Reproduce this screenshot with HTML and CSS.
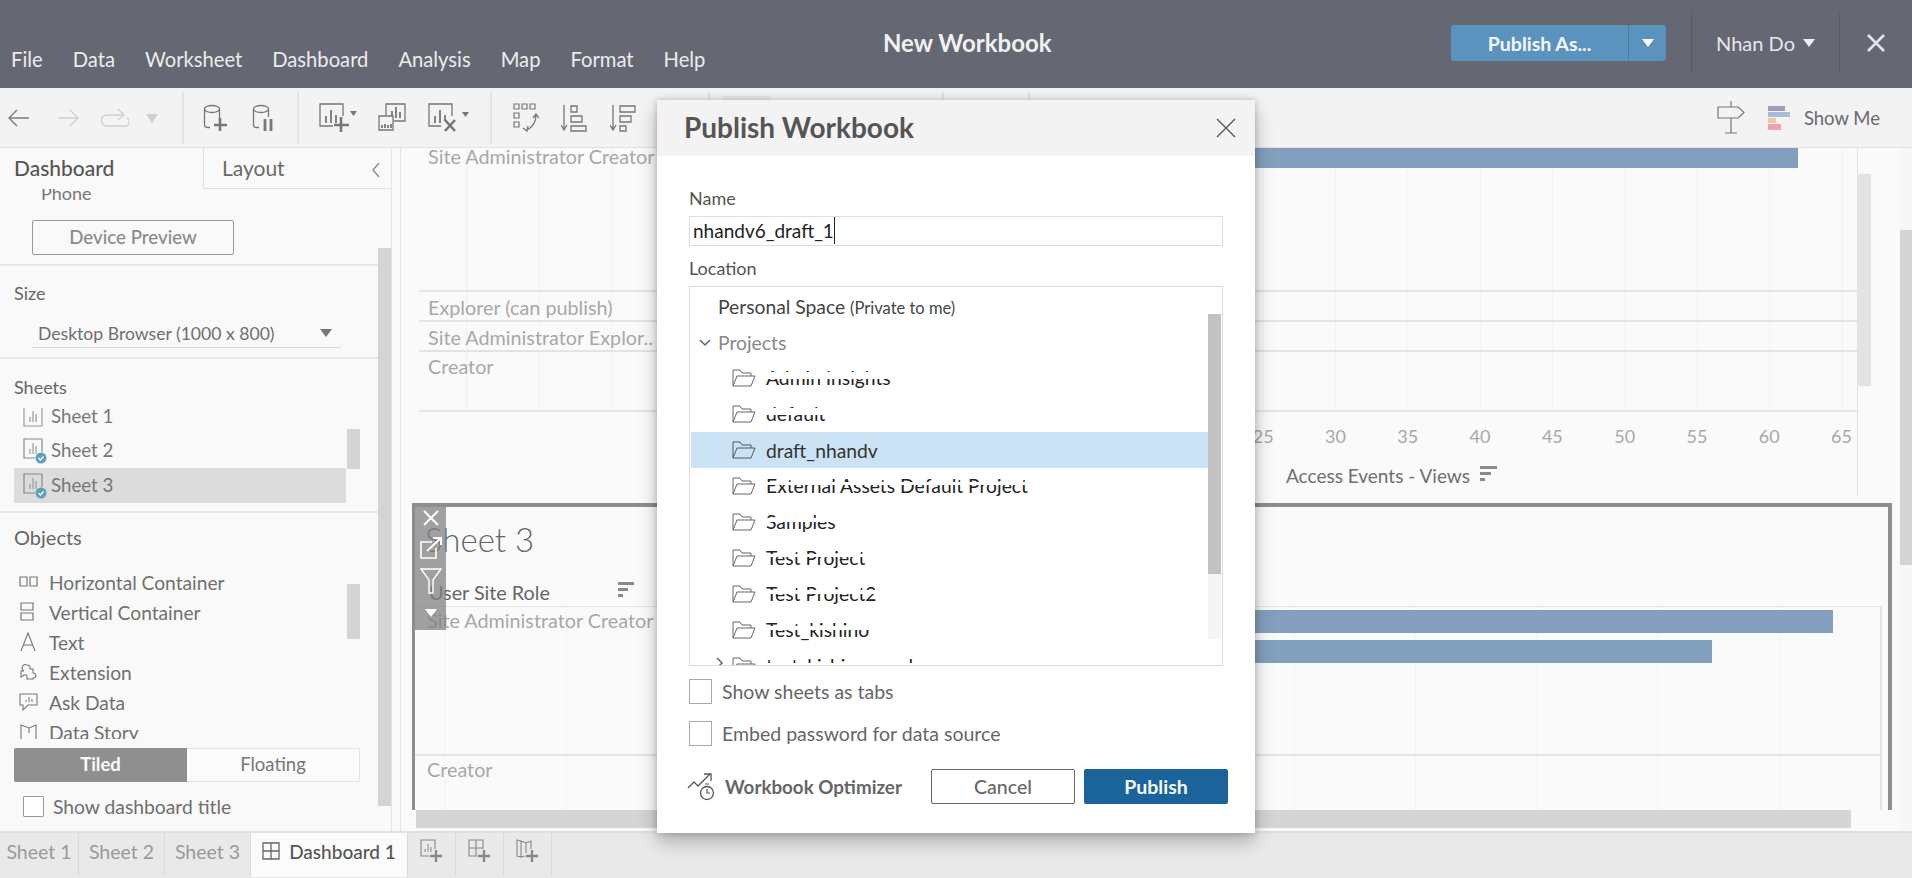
FILE: index.html
```html
<!DOCTYPE html>
<html lang="en">
<head>
<meta charset="utf-8">
<title>New Workbook</title>
<link rel="stylesheet" href="styles.css">
</head>
<body>
<div class="app">
  <header class="topbar">
    <nav class="menu">
      <span>File</span><span>Data</span><span>Worksheet</span><span>Dashboard</span><span>Analysis</span><span>Map</span><span>Format</span><span>Help</span>
    </nav>
    <div class="wb-title">New Workbook</div>
    <div class="top-right">
      <div class="publish-split">
        <span class="publish-main">Publish As...</span>
        <span class="publish-caret"><svg width="12" height="8" viewBox="0 0 12 8"><path d="M0 0h12L6 8z" fill="#fff"/></svg></span>
      </div>
      <span class="top-sep"></span>
      <span class="user">Nhan Do <svg width="12" height="8" viewBox="0 0 12 8"><path d="M0 0h12L6 8z" fill="#eee"/></svg></span>
      <span class="top-sep sep2"></span>
      <span class="top-close"><svg width="20" height="20" viewBox="0 0 20 20"><path d="M2 2l16 16M18 2L2 18" stroke="#e4e4e8" stroke-width="2.600" fill="none"/></svg></span>
    </div>
  </header>

  <div class="toolbar">
    <div class="tb-group g1">
      <span class="tb"><svg width="24" height="22" viewBox="0 0 24 22"><path d="M22 11H3M10 3l-8 8 8 8" stroke="#7c7c7c" stroke-width="1.400" fill="none"/></svg></span>
      <span class="tb"><svg width="24" height="22" viewBox="0 0 24 22"><path d="M2 11h19M14 3l8 8-8 8" stroke="#cfcfcf" stroke-width="1.400" fill="none"/></svg></span>
      <span class="tb"><svg width="28" height="20" viewBox="0 0 28 20"><path d="M21 7H6a4.500 4.500 0 0 0 0 11h16a4.500 4.500 0 0 0 4-8" stroke="#cfcfcf" stroke-width="1.400" fill="none"/><path d="M17 1l6 6-6 5" stroke="#cfcfcf" stroke-width="1.400" fill="none"/></svg></span>
      <span class="tb"><svg width="12" height="9" viewBox="0 0 12 9"><path d="M0 0h12L6 9z" fill="#cfcfcf"/></svg></span>
    </div>
    <div class="tb-group g2">
      <span class="tb"><svg width="26" height="28" viewBox="0 0 26 28"><ellipse cx="9" cy="5" rx="7.500" ry="3.500" fill="none" stroke="#777" stroke-width="1.300"/><path d="M1.500 5v16q0 2.500 3.500 2.500h2M16.500 5v11" fill="none" stroke="#777" stroke-width="1.300"/><path d="M17 14v13M11 21h13" stroke="#777" stroke-width="2.600"/></svg></span>
      <span class="tb"><svg width="24" height="28" viewBox="0 0 24 28"><ellipse cx="9" cy="5" rx="7.500" ry="3.500" fill="none" stroke="#777" stroke-width="1.300"/><path d="M1.500 5v16q0 2.500 3.500 2.500h2M16.500 5v8" fill="none" stroke="#777" stroke-width="1.300"/><path d="M13 15v12M19 15v12" stroke="#777" stroke-width="2.800"/></svg></span>
    </div>
    <div class="tb-group g3">
      <span class="tb"><svg width="38" height="30" viewBox="0 0 38 30"><path d="M14 23H1V1h23v12" fill="none" stroke="#777" stroke-width="1.300"/><path d="M7 20v-7M12 20V7M17 20v-8" stroke="#777" stroke-width="1.800"/><path d="M22 14v15M15 22h15" stroke="#777" stroke-width="2.600"/><path d="M31 8h7l-3.500 5z" fill="#777"/></svg></span>
      <span class="tb"><svg width="28" height="30" viewBox="0 0 28 30"><path d="M8 12V1h19v17H16" fill="none" stroke="#777" stroke-width="1.300"/><path d="M1 13h14v14H1z" fill="none" stroke="#777" stroke-width="1.300"/><path d="M14 13V8M18 15V4M22 15v-6M4 25v-3M7 25v-4M10 25v-3M13 25v-4" stroke="#777" stroke-width="1.800"/></svg></span>
      <span class="tb"><svg width="42" height="30" viewBox="0 0 42 30"><path d="M13 23H1V1h23v12" fill="none" stroke="#777" stroke-width="1.300"/><path d="M7 20v-7M12 20V7M17 18v-6" stroke="#777" stroke-width="1.800"/><path d="M17 17l10 11M27 17L17 28" stroke="#777" stroke-width="2.600"/><path d="M34 9h7l-3.500 5z" fill="#777"/></svg></span>
    </div>
    <div class="tb-group g4">
      <span class="tb"><svg width="26" height="30" viewBox="0 0 26 30"><path d="M1 1h5v5H1zM9 1h5v5H9zM17 1h5v5h-5zM1 10h5v5H1zM1 19h5v5H1z" fill="none" stroke="#777" stroke-width="1.200"/><path d="M23 12q0 10-9 15M10 25l4 3 1-5M20 15l3-4 3 4" fill="none" stroke="#777" stroke-width="1.300"/></svg></span>
      <span class="tb"><svg width="26" height="30" viewBox="0 0 26 30"><path d="M3 2v24M0 22l3 5 3-5" fill="none" stroke="#777" stroke-width="1.300"/><path d="M10 3h6v6h-6zM10 13h11v6H10zM10 23h15v5H10z" fill="none" stroke="#777" stroke-width="1.300"/></svg></span>
      <span class="tb"><svg width="26" height="30" viewBox="0 0 26 30"><path d="M3 2v24M0 22l3 5 3-5" fill="none" stroke="#777" stroke-width="1.300"/><path d="M10 3h15v6H10zM10 13h11v6H10zM10 23h6v5h-6z" fill="none" stroke="#777" stroke-width="1.300"/></svg></span>
    </div>
    <div class="tb-group g5"><span class="tb-fit"></span></div>
    <div class="tb-group g6"></div>
    <div class="tb-right">
      <svg class="signpost" width="28" height="34" viewBox="0 0 28 34"><path d="M14 0v6M14 17v15M8 32h12M1 6h20l6 5.500-6 5.500H1z" fill="none" stroke="#777" stroke-width="1.200"/></svg>
      <svg width="22" height="24" viewBox="0 0 22 24"><path d="M0 0h17v5H0z" fill="#a89bb5"/><path d="M0 6h22v5H0z" fill="#a7bdd6"/><path d="M0 12h8v5H0z" fill="#f5c7a0"/><path d="M0 18h13v6H0z" fill="#f0a3ae"/></svg>
      <span class="showme">Show Me</span>
    </div>
  </div>

  <main class="workspace">
    <aside class="panel">
      <div class="panel-tabs">
        <span class="ptab active">Dashboard</span>
        <span class="ptab layout">Layout</span>
        <span class="collapse"><svg width="10" height="16" viewBox="0 0 10 16"><path d="M8 1L2 8l6 7" stroke="#888" stroke-width="1.300" fill="none"/></svg></span>
      </div>
      <div class="panel-row">
        <div class="panel-body">
          <section class="sec sec-device">
            <div class="phone">Phone</div>
            <div class="device-btn">Device Preview</div>
          </section>
          <section class="sec sec-size">
            <div class="sec-head">Size</div>
            <div class="size-select"><span>Desktop Browser (1000 x 800)</span><svg width="12" height="8" viewBox="0 0 12 8"><path d="M0 0h12L6 8z" fill="#777"/></svg></div>
          </section>
          <section class="sec sec-sheets">
            <div class="sec-head">Sheets</div>
            <div class="sheet-list">
              <div class="sheet-row">
                <svg class="sheet-ico" width="20" height="22" viewBox="0 0 20 22"><path d="M1 2v18h18V2" fill="none" stroke="#999" stroke-width="1.200"/><path d="M7 16v-5M10 16V5M13 16V8" stroke="#999" stroke-width="1.200"/></svg>
                <span>Sheet 1</span>
              </div>
              <div class="sheet-row">
                <svg class="sheet-ico" width="24" height="26" viewBox="0 0 24 26"><path d="M12 20H1V1h18v13" fill="none" stroke="#888" stroke-width="1.200"/><path d="M7 16v-5M10 16V5M13 16V8" stroke="#999" stroke-width="1.200"/><circle cx="18" cy="20" r="5.500" fill="#5f9fbe"/><path d="M15.500 20l2 2 3-3.500" stroke="#fff" stroke-width="1.300" fill="none"/></svg>
                <span>Sheet 2</span>
              </div>
              <div class="sheet-row selected">
                <svg class="sheet-ico" width="24" height="26" viewBox="0 0 24 26"><path d="M12 20H1V1h18v13" fill="none" stroke="#888" stroke-width="1.200"/><path d="M7 16v-5M10 16V5M13 16V8" stroke="#999" stroke-width="1.200"/><circle cx="18" cy="20" r="5.500" fill="#5f9fbe"/><path d="M15.500 20l2 2 3-3.500" stroke="#fff" stroke-width="1.300" fill="none"/></svg>
                <span>Sheet 3</span>
              </div>
              <span class="thumb sheet-thumb"></span>
            </div>
          </section>
          <section class="sec-objects">
            <div class="sec-head">Objects</div>
            <div class="obj-list">
              <div class="obj"><svg width="20" height="14" viewBox="0 0 20 14"><path d="M1 2h7v9H1zM11 2h7v9h-7z" fill="none" stroke="#777" stroke-width="1.200"/></svg><span>Horizontal Container</span></div>
              <div class="obj"><svg width="20" height="20" viewBox="0 0 20 20"><path d="M2 1h12v7H2zM2 11h12v7H2z" fill="none" stroke="#777" stroke-width="1.200"/></svg><span>Vertical Container</span></div>
              <div class="obj"><svg width="20" height="20" viewBox="0 0 20 20"><path d="M2 19L9 1l7 18M4.500 13h9" fill="none" stroke="#777" stroke-width="1.100"/></svg><span>Text</span></div>
              <div class="obj"><svg width="20" height="20" viewBox="0 0 20 20"><path d="M2 9h3a3 3 0 0 1 3-6 3 3 0 0 1 3 4h3v4a3 3 0 0 1 3 3 3 3 0 0 1-3 2v1H8v-2a2 2 0 0 0-3-2l-3 2z" fill="none" stroke="#777" stroke-width="1.100"/></svg><span>Extension</span></div>
              <div class="obj"><svg width="20" height="20" viewBox="0 0 20 20"><path d="M1 2h17v11H9l-5 5v-5H1z" fill="none" stroke="#777" stroke-width="1.100"/><path d="M7 10V8M10 10V5M13 10V7" stroke="#777" stroke-width="1"/></svg><span>Ask Data</span></div>
              <div class="obj"><svg width="20" height="20" viewBox="0 0 20 20"><path d="M2 19V3l8 3 7-3v16M10 6v5" fill="none" stroke="#777" stroke-width="1.100"/></svg><span>Data Story</span></div>
            </div>
            <span class="thumb obj-thumb"></span>
          </section>
          <div class="mode">
            <span class="mode-on">Tiled</span>
            <span class="mode-off">Floating</span>
          </div>
          <label class="dash-title"><span class="check small"></span><span>Show dashboard title</span></label>
        </div>
        <div class="panel-scroll"><span class="panel-thumb"></span></div>
      </div>
    </aside>

    <div class="gutter"></div>

    <div class="canvas">
      <section class="zone-top">
        <div class="chart-a">
          <div class="rows grid-a">
            <div class="row r1"><span>Site Administrator Creator</span><i class="bar bar-a"></i></div>
            <div class="row r2"><span>Explorer (can publish)</span></div>
            <div class="row r2"><span>Site Administrator Explor..</span></div>
            <div class="row r3"><span>Creator</span></div>
          </div>
          <div class="axis">
            <span>25</span><span>30</span><span>35</span><span>40</span><span>45</span><span>50</span><span>55</span><span>60</span><span>65</span>
          </div>
          <div class="axis-title"><span>Access Events - Views</span><svg width="17" height="16" viewBox="0 0 17 16"><path d="M0 0h17v3H0zM0 6h11v3H0zM0 12h5v3H0z" fill="#8a8a8a"/></svg></div>
          <span class="mini-scroll"></span>
        </div>
      </section>

      <section class="zone-sel">
        <div class="tools">
          <svg width="18" height="18" viewBox="0 0 18 18"><path d="M2 2l14 14M16 2L2 16" stroke="#fff" stroke-width="2" fill="none"/></svg>
          <svg width="24" height="24" viewBox="0 0 24 24"><path d="M13 6H2v16h15V12" fill="none" stroke="#fff" stroke-width="1.600"/><path d="M8 15L22 2M14 2h8v7" fill="none" stroke="#fff" stroke-width="2"/></svg>
          <svg width="22" height="26" viewBox="0 0 22 26"><path d="M1 1h20l-8 11v13h-4V12z" fill="none" stroke="#fff" stroke-width="1.400"/></svg>
          <svg width="12" height="8" viewBox="0 0 12 8"><path d="M0 0h12L6 8z" fill="#fff"/></svg>
        </div>
        <h2 class="sheet-title">Sheet 3</h2>
        <div class="field-head"><span>User Site Role</span><svg width="16" height="16" viewBox="0 0 16 16"><path d="M0 0h16v3H0zM0 6h10v3H0zM0 12h5v3H0z" fill="#8a8a8a"/></svg></div>
        <div class="rows grid-b">
          <div class="row r4"><span>Site Administrator Creator</span><i class="bar bar-b"></i><i class="bar bar-c"></i></div>
          <div class="row r5"><span>Creator</span></div>
        </div>
      </section>

      <div class="hscroll"><span class="hthumb"></span></div>
    </div>

    <div class="vscroll"><span class="vthumb"></span></div>
  </main>

  <footer class="tabs">
    <span class="tab">Sheet 1</span>
    <span class="tab">Sheet 2</span>
    <span class="tab">Sheet 3</span>
    <span class="tab on"><svg width="18" height="18" viewBox="0 0 18 18"><path d="M1 1h16v16H1zM9 1v16M1 9h16" fill="none" stroke="#666" stroke-width="1.300"/></svg>Dashboard 1</span>
    <span class="tab ico"><svg width="24" height="24" viewBox="0 0 24 24"><path d="M9 17H1V1h14v9" fill="none" stroke="#888" stroke-width="1.100"/><path d="M5 13v-3M8 13V5M11 13V8" stroke="#888" stroke-width="1"/><path d="M16 11v12M10 17h12" stroke="#888" stroke-width="2.400"/></svg></span>
    <span class="tab ico"><svg width="24" height="24" viewBox="0 0 24 24"><path d="M9 17H1V1h14v9M8 1v16M1 9h14" fill="none" stroke="#888" stroke-width="1.100"/><path d="M16 11v12M10 17h12" stroke="#888" stroke-width="2.400"/></svg></span>
    <span class="tab ico"><svg width="24" height="24" viewBox="0 0 24 24"><path d="M9 17l-4 1V2l5 2 5-2v8M10 4v10M5 18L1 17V1l4 1" fill="none" stroke="#888" stroke-width="1.100"/><path d="M16 11v12M10 17h12" stroke="#888" stroke-width="2.400"/></svg></span>
  </footer>

  <div class="modal">
    <div class="modal-head">
      <h1>Publish Workbook</h1>
      <svg width="20" height="20" viewBox="0 0 20 20"><path d="M1 1l18 18M19 1L1 19" stroke="#555" stroke-width="1.300" fill="none"/></svg>
    </div>
    <div class="modal-body">
      <div class="m-label first">Name</div>
      <div class="m-input"><span class="typed">nhandv6_draft_1</span></div>
      <div class="m-label">Location</div>
      <div class="tree">
        <div class="t-row top"><span>Personal Space <small>(Private to me)</small></span></div>
        <div class="t-row top muted"><svg class="chev" width="12" height="8" viewBox="0 0 12 8"><path d="M1 1l5 5 5-5" stroke="#666" stroke-width="1.500" fill="none"/></svg><span>Projects</span></div>
        <div class="t-row proj"><svg class="folder" width="24" height="18" viewBox="0 0 24 18"><path d="M1 17V1h7l2 3h9v3M1 17l4-10h18l-4 10z" fill="none" stroke="#666" stroke-width="1"/></svg><span class="torn t-a">Admin Insights</span></div>
        <div class="t-row proj"><svg class="folder" width="24" height="18" viewBox="0 0 24 18"><path d="M1 17V1h7l2 3h9v3M1 17l4-10h18l-4 10z" fill="none" stroke="#666" stroke-width="1"/></svg><span class="torn t-a">default</span></div>
        <div class="t-row proj sel"><svg class="folder" width="24" height="18" viewBox="0 0 24 18"><path d="M1 17V1h7l2 3h9v3M1 17l4-10h18l-4 10z" fill="none" stroke="#4c5a66" stroke-width="1"/></svg><span>draft_nhandv</span></div>
        <div class="t-row proj"><svg class="folder" width="24" height="18" viewBox="0 0 24 18"><path d="M1 17V1h7l2 3h9v3M1 17l4-10h18l-4 10z" fill="none" stroke="#666" stroke-width="1"/></svg><span class="torn t-b">External Assets Default Project</span></div>
        <div class="t-row proj"><svg class="folder" width="24" height="18" viewBox="0 0 24 18"><path d="M1 17V1h7l2 3h9v3M1 17l4-10h18l-4 10z" fill="none" stroke="#666" stroke-width="1"/></svg><span class="torn t-c">Samples</span></div>
        <div class="t-row proj"><svg class="folder" width="24" height="18" viewBox="0 0 24 18"><path d="M1 17V1h7l2 3h9v3M1 17l4-10h18l-4 10z" fill="none" stroke="#666" stroke-width="1"/></svg><span class="torn t-b">Test Project</span></div>
        <div class="t-row proj"><svg class="folder" width="24" height="18" viewBox="0 0 24 18"><path d="M1 17V1h7l2 3h9v3M1 17l4-10h18l-4 10z" fill="none" stroke="#666" stroke-width="1"/></svg><span class="torn t-c">Test Project2</span></div>
        <div class="t-row proj"><svg class="folder" width="24" height="18" viewBox="0 0 24 18"><path d="M1 17V1h7l2 3h9v3M1 17l4-10h18l-4 10z" fill="none" stroke="#666" stroke-width="1"/></svg><span class="torn t-c">Test_kishino</span></div>
        <div class="t-row proj"><svg class="chev2" width="8" height="12" viewBox="0 0 8 12"><path d="M1 1l5 5-5 5" stroke="#666" stroke-width="1.500" fill="none"/></svg><svg class="folder" width="24" height="18" viewBox="0 0 24 18"><path d="M1 17V1h7l2 3h9v3M1 17l4-10h18l-4 10z" fill="none" stroke="#666" stroke-width="1"/></svg><span class="torn t-d">test_kishino_reader</span></div>
        <div class="tree-track"><span class="tree-thumb"></span></div>
      </div>
      <label class="m-check c1"><span class="check"></span><span>Show sheets as tabs</span></label>
      <label class="m-check c2"><span class="check"></span><span>Embed password for data source</span></label>
      <div class="m-foot">
        <svg class="opt-ico" width="29" height="28" viewBox="0 0 29 28"><path d="M1 15l6-6 4 4 12-12M17 1h7v7" fill="none" stroke="#555" stroke-width="1.300"/><circle cx="20" cy="20" r="6.500" fill="#fff" stroke="#555" stroke-width="1.300"/><path d="M20 16v4h3M18 11h4" fill="none" stroke="#555" stroke-width="1.200"/></svg>
        <span class="opt">Workbook Optimizer</span>
        <span class="btn cancel">Cancel</span>
        <span class="btn publish">Publish</span>
      </div>
    </div>
  </div>
</div>
</body>
</html>
```
FILE: styles.css
```css
* { box-sizing: border-box; }
html, body { margin: 0; height: 100%; overflow: hidden; }
body { font-family: "Lato", "Liberation Sans", sans-serif; color: #666; background: #e9e9e9; }
svg { display: block; flex: none; }

.app { position: relative; width: 1912px; height: 878px; display: flex; flex-direction: column; overflow: hidden; }

/* top bar */
.topbar { height: 88px; flex: none; background: #656772; display: flex; position: relative; }
.menu { display: flex; gap: 30px; padding: 47px 0 0 11px; font-size: 20.200px; line-height: 24px; color: #ececec; }
.wb-title { position: absolute; left: 883px; top: 27px; font-size: 24px; line-height: 32px; font-weight: 700; color: #f1f1f1; }
.top-right { margin-left: auto; display: flex; align-items: center; height: 86px; }
.publish-split { display: flex; height: 36px; width: 215px; background: #5b93bf; border-radius: 3px; color: #f6f9fb; font-weight: 700; font-size: 19.500px; }
.publish-main { width: 178px; display: flex; align-items: center; justify-content: center; border-right: 1px solid #4f7a9e; }
.publish-caret { flex: 1; display: flex; align-items: center; justify-content: center; }
.top-sep { width: 1px; height: 59px; background: #565863; margin-left: 25px; }
.top-sep.sep2 { margin-left: 24px; }
.user { display: flex; align-items: center; gap: 8px; margin-left: 24px; font-size: 20px; color: #e6e6ea; }
.top-close { width: 72px; display: flex; justify-content: center; }

/* toolbar */
.toolbar { height: 60px; flex: none; background: #f3f3f3; display: flex; border-bottom: 1px solid #e2e2e2; }
.tb-group { display: grid; height: 52px; margin-top: 4px; border-right: 2px solid #e3e3e3; }
.tb { display: flex; align-items: center; justify-content: center; }
.g1 { width: 184px; grid-template-columns: 38px 60px 34px 40px; }
.g2 { width: 115px; grid-template-columns: 64px 32px; }
.g3 { width: 193px; grid-template-columns: 78px 30px 84px; }
.g4 { width: 218px; grid-template-columns: 68px 28px 70px; }
.g5 { width: 234px; }
.g6 { width: 86px; }
.tb-fit { display: block; width: 48px; height: 8px; margin: 4px 0 0 13px; background: #e8e8e8; }
.tb-right { margin-left: auto; display: flex; align-items: center; padding-right: 32px; }
.signpost { margin-right: 23px; }
.showme { margin-left: 14px; font-size: 18.500px; color: #6a6a6a; }

/* workspace */
.workspace { flex: 1; min-height: 0; display: flex; background: #fafafa; }

.panel { width: 392px; flex: none; display: flex; flex-direction: column; background: #f9f9f9; border-right: 1px solid #e4e4e4; }
.panel-tabs { height: 41px; flex: none; display: flex; align-items: center; position: relative; }
.ptab { font-size: 21px; line-height: 39px; height: 41px; }
.ptab.active { width: 203px; padding-left: 14px; color: #555; font-weight: 500; }
.ptab.layout { flex: 1; padding-left: 18px; border-left: 1px solid #e0e0e0; border-bottom: 1px solid #e0e0e0; color: #6a6a6a; }
.collapse { position: absolute; left: 371px; top: 14px; }
.panel-row { flex: 1; min-height: 0; display: flex; }
.panel-body { width: 378px; flex: none; }
.panel-scroll { flex: 1; margin-top: 27px; height: 590px; padding-top: 32px; }
.panel-thumb { display: block; height: 558px; background: #d4d4d4; }

.sec { border-bottom: 2px solid #e6e6e6; }
.sec-device { height: 77px; }
.phone { height: 11px; overflow: hidden; margin-left: 41px; font-size: 18px; line-height: 8px; color: #777; padding: 0; }
.device-btn { margin: 20px 0 0 32px; width: 202px; height: 35px; border: 1px solid #9a9a9a; border-radius: 2px; display: flex; align-items: center; justify-content: center; font-size: 18.700px; font-weight: 500; color: #8a8a8a; padding-bottom: 2px; }
.sec-head { padding-left: 14px; font-size: 18px; line-height: 24px; color: #666; }
.sec-size { height: 93px; padding-top: 15px; }
.size-select { margin: 8px 0 0 32px; width: 309px; height: 35px; padding: 6px 9px 0 6px; display: flex; align-items: center; justify-content: space-between; border-bottom: 1px solid #d8d8d8; font-size: 17.600px; color: #6f6f6f; }
.sec-sheets { height: 154px; padding-top: 16px; }
.sheet-list { position: relative; margin-top: 1px; }
.sheet-row { margin-left: 14px; width: 332px; height: 35px; display: flex; align-items: center; gap: 4px; padding-left: 9px; font-size: 18.700px; color: #777; margin-bottom: 0; }
.sheet-row span { margin-top: -2px; }
.sheet-row:first-child { height: 33px; gap: 8px; }
.sheet-row.selected { background: #dcdcdc; }
.thumb { position: absolute; display: block; left: 347px; width: 13px; background: #d4d4d4; }
.sheet-thumb { top: 29px; height: 40px; }
.sec-objects { position: relative; height: 226px; padding-top: 12px; overflow: hidden; }
.sec-objects .sec-head { font-size: 20px; }
.obj-list { margin-top: 18px; padding-left: 19px; }
.obj { height: 30px; display: flex; align-items: center; gap: 10px; font-size: 19.200px; color: #707070; }
.obj-thumb { top: 71px; height: 55px; }
.mode { margin: 9px 0 0 14px; width: 346px; height: 34px; display: flex; font-size: 18.500px; border: 1px solid #e2e2e2; background: #fbfbfb; }
.mode-on { width: 173px; margin: -1px 0 -1px -1px; background: #8f8f8f; color: #fafafa; font-weight: 700; border-radius: 2px 0 0 2px; display: flex; align-items: center; justify-content: center; padding-bottom: 2px; }
.mode-off { flex: 1; display: flex; align-items: center; justify-content: center; color: #777; padding-bottom: 2px; }
.dash-title { margin: 13px 0 0 23px; display: flex; align-items: center; gap: 9px; font-size: 19.300px; color: #6f6f6f; }
.check { display: block; width: 23px; height: 25px; flex: none; border: 1px solid #a9a9a9; background: #fff; }
.check.small { width: 21px; height: 21px; border-color: #9a9a9a; border-radius: 1px; }

.gutter { width: 9px; flex: none; border-right: 1px solid #e4e4e4; background: #f9f9f9; }

/* canvas */
.canvas { flex: 1; min-width: 0; display: flex; flex-direction: column; background: #fafafa; }
.zone-top { height: 355px; flex: none; padding-left: 18px; overflow: hidden; }
.chart-a { position: relative; width: 1439px; height: 348px; border-right: 1px solid #e2e2e2; }
.rows { position: relative; }
.grid-a { background: linear-gradient(90deg, #f1f1f1 1px, transparent 1px) 916px 0 / 72.400px 100%; }
.row { position: relative; border-bottom: 2px solid #e3e3e3; font-size: 19.800px; color: #a8a8a8; padding-left: 9px; }
.row > span { display: block; line-height: 26px; white-space: nowrap; }
.r1 { height: 144px; }
.r1 > span { line-height: 17px; }
.r2 { height: 30px; padding-top: 2px; }
.r3 { height: 60px; padding-top: 1px; }
.r4 { height: 149px; }
.r5 { height: 56px; border-bottom: 0; }
.bar { position: absolute; display: block; background: #82a0bd; }
.bar-a { left: 260px; width: 1119px; top: 0; height: 20px; }
.bar-b { left: 260px; width: 1158px; top: 3px; height: 23px; }
.bar-c { left: 260px; width: 1037px; top: 33px; height: 23px; }
.axis { display: flex; padding: 12px 0 0 808px; font-size: 18px; line-height: 24px; color: #a8a8a8; }
.axis span { width: 72.300px; text-align: center; flex: none; }
.axis-title { display: flex; align-items: center; gap: 10px; margin: 16px 0 0 867px; font-size: 19px; line-height: 24px; color: #6f6f6f; }
.axis-title svg { margin-top: -4px; }
.mini-scroll { position: absolute; left: 1439px; top: 26px; width: 13px; height: 212px; background: #e3e3e3; }

.zone-sel { position: relative; height: 307px; flex: none; margin-left: 11px; width: 1480px; border: solid #8e8e8e; border-width: 4px 4px 0 3px; overflow: hidden; }
.tools { position: absolute; z-index: 2; left: 0; top: 0; width: 31px; height: 123px; background: rgba(130, 130, 130, .75); display: flex; flex-direction: column; align-items: center; padding-top: 2px; }
.tools svg:nth-child(2) { margin-top: 9px; }
.tools svg:nth-child(3) { margin-top: 8px; }
.tools svg:nth-child(4) { margin-top: 15px; }
.sheet-title { margin: 0; padding: 13px 0 0 10px; font-size: 33px; line-height: 38px; font-weight: 300; color: #666; }
.field-head { display: flex; align-items: center; padding-left: 14px; margin-top: 21px; height: 26px; font-size: 19.800px; color: #666; }
.field-head svg { margin: -4px 0 0 29px; }
.field-head span { width: 160px; white-space: nowrap; }
.grid-b { margin-top: 1px; width: 1467px; border-top: 1px solid #e3e3e3; border-right: 2px solid #e3e3e3; background: linear-gradient(90deg, #f3f3f3 1px, transparent 1px) 1000px 0 / 121.300px 100%; }
.grid-b .row { padding-left: 12px; }
.hscroll { height: 18px; flex: none; margin-left: 15px; width: 1435px; background: #d5d5d5; }
.hthumb { display: block; }
.vscroll { width: 12px; flex: none; padding-top: 82px; background: #f7f7f7; }
.vthumb { display: block; height: 335px; background: #d4d4d4; }

/* sheet tabs */
.tabs { height: 47px; flex: none; background: #e9e9e9; border-top: 2px solid #e0e0e0; display: flex; font-size: 19.500px; color: #999; }
.tab { height: 44px; display: flex; align-items: center; justify-content: center; gap: 9px; border-right: 1px solid #dadada; width: 86px; padding-bottom: 8px; }
.tab:first-child { width: 79px; }
.tab.on { width: 157px; background: #fbfbfb; color: #555; font-weight: 500; font-size: 19px; }
.tab.ico { width: 48px; }

/* modal */
.modal { position: absolute; z-index: 5; left: 657px; top: 100px; width: 598px; height: 733px; background: #fff; box-shadow: 0 8px 18px rgba(0, 0, 0, .28), 0 0 6px rgba(0, 0, 0, .18); display: flex; flex-direction: column; }
.modal-head { height: 56px; flex: none; background: #f3f3f3; display: flex; align-items: center; justify-content: space-between; padding: 0 19px 0 27px; }
.modal-head h1 { margin: 0 0 2px; font-size: 28px; font-weight: 700; color: #555; }
.modal-body { padding: 0 32px; }
.m-label { margin-top: 10px; font-size: 18px; line-height: 24px; color: #555; }
.m-label.first { margin-top: 30px; }
.m-input { margin-top: 6px; height: 30px; border: 1px solid #ddd; padding-left: 3px; font-size: 19px; line-height: 27px; color: #222; }
.typed { border-right: 1px solid #222; display: inline-block; height: 27px; }
.tree { position: relative; margin-top: 6px; height: 380px; border: 1px solid #ddd; overflow: hidden; padding-top: 1px; font-size: 19.300px; }
.t-row { height: 36px; width: 517px; margin-left: 1px; display: flex; align-items: center; color: #444; position: relative; }
.t-row.top { padding-left: 27px; }
.t-row small { font-size: 16.500px; }
.t-row.muted { color: #888; }
.chev { position: absolute; left: 8px; top: 15px; }
.chev2 { position: absolute; left: 25px; top: 9px; }
.t-row.proj { padding-left: 41px; gap: 10px; color: #222; }
.t-row.sel { background: #cbe3f5; color: #333; }
.torn { position: relative; display: block; line-height: 24px; white-space: nowrap; }
.torn::after { content: ""; position: absolute; left: -2px; right: -2px; background: #fff; }
.t-a::after { top: 6px; height: 7px; }
.t-b::after { top: 8px; height: 3px; }
.t-c::after { top: 8px; height: 4px; }
.t-d::after { top: 9px; height: 3px; }
.tree-track { position: absolute; left: 518px; top: 27px; width: 13px; height: 325px; background: #f5f5f5; }
.tree-thumb { display: block; height: 260px; background: #c2c2c2; }
.m-check { display: flex; align-items: center; gap: 10px; font-size: 19.500px; color: #666; }
.m-check.c1 { margin-top: 13px; }
.m-check.c2 { margin-top: 17px; }
.m-foot { margin: 23px -5px 0 -2px; display: flex; align-items: center; height: 35px; }
.opt { margin-left: 9px; font-size: 18.800px; font-weight: 700; color: #666; }
.btn { width: 144px; height: 35px; display: flex; align-items: center; justify-content: center; border-radius: 2px; font-size: 19.500px; }
.cancel { margin-left: auto; border: 1px solid #666; color: #666; font-weight: 500; }
.publish { margin-left: 9px; background: #1a6499; color: #f4fafd; font-weight: 700; }
```
